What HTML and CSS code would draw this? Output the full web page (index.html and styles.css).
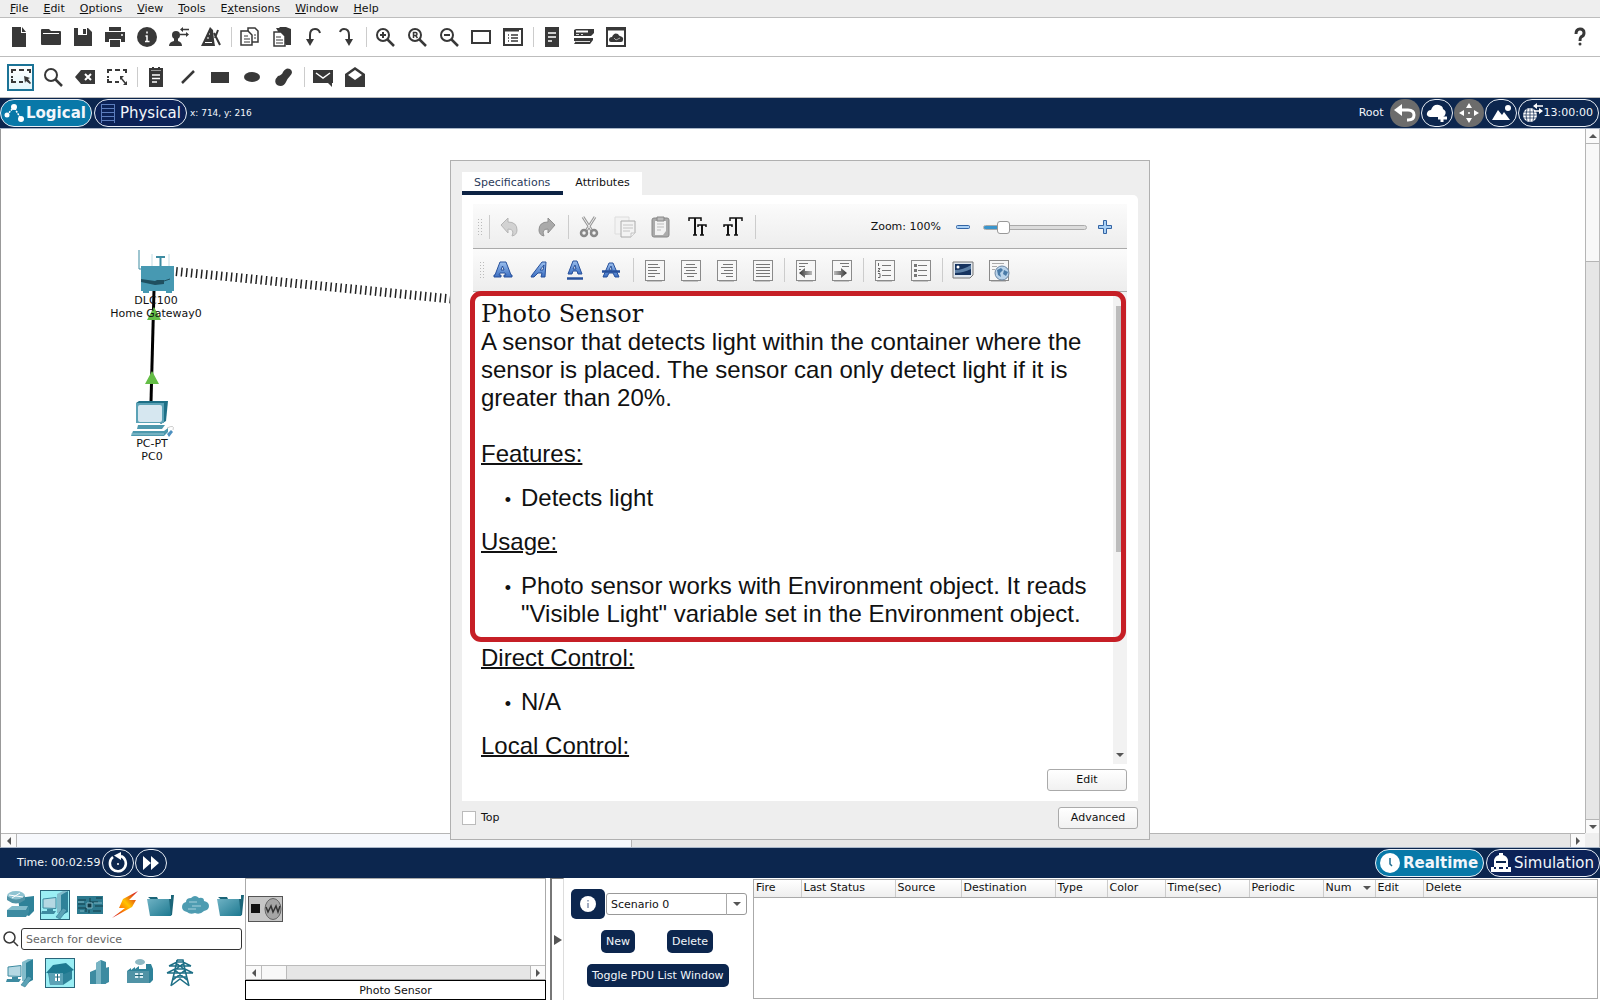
FILE: index.html
```html
<!DOCTYPE html>
<html lang="en">
<head>
<meta charset="utf-8">
<title>Network Simulator</title>
<link rel="stylesheet" href="styles.css">
</head>
<body>
<svg class="defs" aria-hidden="true">
  <defs>
    <linearGradient id="teal" x1="0" y1="0" x2="1" y2="1"><stop offset="0" stop-color="#6fb2c4"/><stop offset="1" stop-color="#1d7990"/></linearGradient>
    <linearGradient id="blue" x1="0" y1="0" x2="0" y2="1"><stop offset="0" stop-color="#9cc0ee"/><stop offset="1" stop-color="#3c6fc2"/></linearGradient>
    <linearGradient id="fire" x1="1" y1="0" x2="0" y2="1"><stop offset="0.1" stop-color="#d8231c"/><stop offset="0.45" stop-color="#ffc400"/><stop offset="0.6" stop-color="#ff9000"/><stop offset="0.9" stop-color="#d8231c"/></linearGradient>
    <linearGradient id="fade" x1="0" y1="0" x2="1" y2="0"><stop offset="0" stop-color="#333"/><stop offset="1" stop-color="#bbb"/></linearGradient>
    <linearGradient id="fadeR" x1="1" y1="0" x2="0" y2="0"><stop offset="0" stop-color="#333"/><stop offset="1" stop-color="#bbb"/></linearGradient>
    <g id="page"><rect x="1.500" y="1.500" width="19" height="20" fill="#f7f7f7" stroke="#8a8a8a"/><path d="M3 22.500h15" stroke="#c4c4c4"/></g>
    <g id="lens" fill="none" stroke="#383838"><circle cx="8" cy="8" r="6" stroke-width="2"/><path d="M12.500 12.500 19 19" stroke-width="2.500"/></g>
    <g id="marquee" fill="none" stroke="#383838" stroke-width="2"><path d="M1 6V3h4M8 3h5M16 3h3v3M1 9v2M1 12v3h4M8 15h4"/></g>
    <g id="workstation">
      <path d="M18 4 27 1V22L19 26Z" fill="#2e8299"/><path d="M16 4 22 1h5l-7 4v18h-4z" fill="#82bccb"/>
      <path d="M2 9 15 7.500V18.500L2 18Z" fill="#b5d8e3" stroke="#3d8ba1"/><path d="M6 19h6v2H6zM1 21h14l-2 3H0z" fill="#3d8ba1"/>
      <path d="M15 27 22 18l4 2-7 9z" fill="#5ba2b6" stroke="#1d6f86" stroke-width=".5"/>
    </g>
    <g id="folder"><path d="M2 7h9l1 2h13V5h3L26 25 24 26z" fill="#1b6578"/><path d="M1 9h22l2 17H4Z" fill="url(#teal)"/></g>
  </defs>
</svg>

<nav class="menubar">
  <a href="#"><u>F</u>ile</a><a href="#"><u>E</u>dit</a><a href="#"><u>O</u>ptions</a><a href="#"><u>V</u>iew</a><a href="#"><u>T</u>ools</a><a href="#">E<u>x</u>tensions</a><a href="#"><u>W</u>indow</a><a href="#"><u>H</u>elp</a>
</nav>

<div class="toolbar">
  <button class="tool" aria-label="New"><svg width="20" height="20"><path d="M3 0h9v6h5v14H3zM13 0l4 5h-4z" fill="#383838"/></svg></button>
  <button class="tool" aria-label="Open"><svg width="20" height="20"><path d="M0 3q0-1 1-1h7l2 2h9q1 0 1 1v12q0 1-1 1H1q-1 0-1-1z" fill="#383838"/><path d="M2 6.500h16" stroke="#fff"/></svg></button>
  <button class="tool" aria-label="Save"><svg width="20" height="20"><path d="M1 1h14l4 4v14H1z" fill="#383838"/><path d="M5 1h9v7H5z" fill="#fff"/><path d="M10 2h3v5h-3z" fill="#383838"/></svg></button>
  <button class="tool" aria-label="Print"><svg width="20" height="20"><path d="M4 0h12v4H4zM0 5h20v10h-4v-3H4v3H0zM5 13h10v7H5z" fill="#383838"/><circle cx="17" cy="8" r="1" fill="#fff"/></svg></button>
  <button class="tool" aria-label="Info"><svg width="20" height="20"><circle cx="10" cy="10" r="10" fill="#383838"/><path d="M10 4.500v2M8.500 9H10v5M8 14.500h4.500" stroke="#fff" stroke-width="1.500" fill="none"/></svg></button>
  <button class="tool" aria-label="User profile"><svg width="20" height="20"><circle cx="7" cy="8" r="4" fill="#383838"/><path d="M5 10h4v4q4 1 4 5H0q0-4 5-5z" fill="#383838"/><path d="M13 2.500h7M11 7.500h6" stroke="#383838" stroke-width="1.500"/><path d="M11 2.500l3-2.500v5zM20 7.500l-3-2.500v5z" fill="#383838"/></svg></button>
  <button class="tool" aria-label="Wizard"><svg width="20" height="20"><path d="M9 0 12 3 13 13l1 6H0l2-4z" fill="#383838"/><path d="M13 6l6 12M17 3l-3 8" stroke="#383838" stroke-width="2" fill="none"/><path d="M6 11h2M8 7h1M4 15.500h7" stroke="#fff"/></svg></button>
  <span class="sep"></span>
  <button class="tool" aria-label="Copy"><svg width="20" height="20" fill="#fff" stroke="#383838" stroke-width="1.500"><path d="M8 1h7l3 3v11H8z"/><path d="M1 4h7l4 4v10H1z"/><path d="M4 9h4M4 12h6M4 15h6M14 8h2M14 11h2" stroke-width="1"/></svg></button>
  <button class="tool" aria-label="Paste"><svg width="20" height="20"><path d="M4 1h3l1-1h6l5 2v16h-5z" fill="#383838"/><path d="M2 5h7l4 4v10H2z" fill="#fff" stroke="#383838" stroke-width="1.500"/><path d="M4 10h5M4 13h7M4 16h7" stroke="#383838"/></svg></button>
  <button class="tool" aria-label="Undo"><svg width="20" height="20"><path d="M6 14V8q0-6 5-6 4 0 5 4" fill="none" stroke="#383838" stroke-width="2"/><path d="M2 12h8l-4 7z" fill="#383838"/></svg></button>
  <button class="tool" aria-label="Redo"><svg width="20" height="20"><path d="M13 14V8q0-6-5-6-3 0-4 3" fill="none" stroke="#383838" stroke-width="2"/><path d="M9 12h8l-4 7z" fill="#383838"/></svg></button>
  <span class="sep"></span>
  <button class="tool" aria-label="Zoom in"><svg width="20" height="20"><use href="#lens"/><path d="M5 8h6M8 5v6" stroke="#383838" stroke-width="2"/></svg></button>
  <button class="tool" aria-label="Reset zoom"><svg width="20" height="20"><use href="#lens"/><path d="M6.500 11V5.500h2q1.500 0 1.500 1.500t-1.500 1.500h-2M8.500 8.500l2 2.500" stroke="#383838" stroke-width="1.500" fill="none"/></svg></button>
  <button class="tool" aria-label="Zoom out"><svg width="20" height="20"><use href="#lens"/><path d="M5 8h6" stroke="#383838" stroke-width="2"/></svg></button>
  <button class="tool" aria-label="Panel"><svg width="20" height="20"><rect x="1" y="4" width="18" height="12" fill="#fff" stroke="#383838" stroke-width="2"/></svg></button>
  <button class="tool" aria-label="List"><svg width="20" height="20"><rect x="1" y="2" width="18" height="16" fill="#fff" stroke="#383838" stroke-width="2"/><path d="M1 3h15" stroke="#383838" stroke-width="3"/><path d="M5 8h1M8 8h7M5 11h1M8 11h7M5 14h1M8 14h7" stroke="#383838" stroke-width="1.500"/></svg></button>
  <span class="sep"></span>
  <button class="tool" aria-label="Notes"><svg width="20" height="20"><path d="M3 0h14v20H3z" fill="#383838"/><path d="M6 6h8M6 10h8M6 14h4" stroke="#fff" stroke-width="1.500"/></svg></button>
  <button class="tool" aria-label="Racks"><svg width="20" height="20"><path d="M0 3l2-1h18v4l-3 3H0zM0 11h19v2l-3 4H0l2-3H0z" fill="#383838"/><path d="M2 4.500h12" stroke="#fff" stroke-width="2"/><path d="M2 7.500h3M7 7.500h2M2 14.500h14" stroke="#ddd"/></svg></button>
  <button class="tool" aria-label="Cloud"><svg width="20" height="20"><rect x="1" y="1" width="18" height="18" fill="#fff" stroke="#383838" stroke-width="2"/><path d="M1 2h18" stroke="#383838" stroke-width="3"/><path d="M3 13q0-3 3-3 2-5 6-3 1 2 2 2 4 1 3 4 0 2-2 2H5q-2 0-2-2z" fill="#383838"/><path d="M8 11l2 2 4-2" stroke="#aaa" fill="none"/></svg></button>
  <span class="grow"></span>
  <button class="tool" aria-label="Help"><svg width="20" height="20"><path d="M6 7q0-5 4-5t4 4q0 3-3 4-1 1-1 4" fill="none" stroke="#383838" stroke-width="3"/><circle cx="10" cy="17" r="1.500" fill="#383838"/></svg></button>
</div>

<div class="toolbar toolbar-draw">
  <button class="tool selected" aria-label="Select"><svg width="20" height="20"><use href="#marquee"/><path d="M13 9l6 2-2 1 3 4-1 1-4-3-1 2z" fill="#383838"/></svg></button>
  <button class="tool" aria-label="Inspect"><svg width="20" height="20"><use href="#lens"/></svg></button>
  <button class="tool" aria-label="Delete"><svg width="20" height="20"><path d="M0 10 6 3h14v14H6z" fill="#383838"/><path d="M10 7l6 6M16 7l-6 6" stroke="#fff" stroke-width="2"/></svg></button>
  <button class="tool" aria-label="Resize"><svg width="20" height="20"><use href="#marquee"/><path d="M14 11l5 6" stroke="#383838" stroke-width="1.500"/><path d="M13 9h4l-4 4zM20 18v-4l-4 4z" fill="#383838"/></svg></button>
  <span class="sep"></span>
  <button class="tool" aria-label="Place note"><svg width="20" height="20"><path d="M3 1h3V0h2v1h4V0h2v1h3v19H3z" fill="#383838"/><path d="M5 3.500h10" stroke="#999"/><path d="M6 8h8M6 11.500h8M6 15h5" stroke="#fff" stroke-width="1.500"/></svg></button>
  <button class="tool" aria-label="Draw line"><svg width="20" height="20"><path d="M4 16 16 4" stroke="#383838" stroke-width="2.500"/></svg></button>
  <button class="tool" aria-label="Draw rectangle"><svg width="20" height="20"><path d="M1 5h18v11H1z" fill="#383838"/></svg></button>
  <button class="tool" aria-label="Draw ellipse"><svg width="20" height="20"><ellipse cx="10" cy="10" rx="8" ry="5" fill="#383838"/></svg></button>
  <button class="tool" aria-label="Draw shape"><svg width="20" height="20"><path d="M9 5q3-5 7-3 4 3 0 7-3 3-4 6-3 6-9 3-4-4 1-9 4-1 5-4z" fill="#383838"/></svg></button>
  <span class="sep"></span>
  <button class="tool" aria-label="Simple PDU"><svg width="20" height="20"><path d="M0 3h20v13h-1v4l-4-4H0z" fill="#383838"/><path d="M3 6l7 5 7-5" stroke="#fff" stroke-width="1.500" fill="none"/></svg></button>
  <button class="tool" aria-label="Complex PDU"><svg width="20" height="20"><path d="M0 7 10 0l10 7v13H0z" fill="#383838"/><path d="M3 8l7-5 7 5-7 5z" fill="#fff"/></svg></button>
</div>

<header class="navbar">
  <button class="pill active"><svg width="20" height="20"><path d="M3 12 10 4l7 12" stroke="#fff" stroke-width="1.500" stroke-dasharray="2 1" fill="none"/><circle cx="3" cy="12" r="2.500" fill="#fff"/><circle cx="10" cy="4" r="3" fill="#fff"/><circle cx="17" cy="16" r="3" fill="#fff"/></svg>Logical</button>
  <button class="pill"><svg width="20" height="20" fill="none" stroke="#5c7dbd"><path d="M3.500 1v19M16.500 1v19M3 1.500h14M3 5.500h14M3 9.500h14M3 13.500h14M3 17.500h14"/></svg>Physical</button>
  <span class="coords">x: 714, y: 216</span>
  <span class="grow"></span>
  <div class="places">
    <span class="root">Root</span>
    <button class="round gray" aria-label="Back"><svg width="24" height="20"><path d="M7 7h8q6 0 6 5t-6 5h-1" fill="none" stroke="#fff" stroke-width="3"/><path d="M1 7l8-6v12z" fill="#fff"/></svg></button>
    <button class="round" aria-label="New cluster"><svg width="24" height="22"><path d="M5 15q-4-1-3-4 1-3 4-3 2-6 8-5 4 1 4 4 4 2 2 6-1 2-5 2z" fill="#fff"/><path d="M17 11v9M13 16h9" stroke="#fff" stroke-width="3"/></svg></button>
    <button class="round gray" aria-label="Move object"><svg width="22" height="22" fill="#fff"><path d="M11 1l3 5H8zM11 21l3-5H8zM1 11l5-3v6zM21 11l-5-3v6z"/><circle cx="11" cy="11" r="1"/></svg></button>
    <button class="round" aria-label="Background"><svg width="22" height="22" fill="#fff"><path d="M2 18 8 8l4 5 2-3 6 8z"/><circle cx="18" cy="6" r="3"/></svg></button>
    <button class="pill env"><svg width="22" height="20"><circle cx="8" cy="12" r="7" fill="#fff"/><path d="M1 9h14M1 12h14M1 15h14M8 5v14M5 6q-2 6 0 12M11 6q2 6 0 12" stroke="#0c264e" stroke-width=".7" fill="none"/><path d="M14 3h7M12 8h6" stroke="#fff" stroke-width="1.500"/><path d="M11 3l4-3v6zM21 8l-4-3v6z" fill="#fff"/></svg>13:00:00</button>
  </div>
</header>

<main class="workspace">
  <div class="canvas">
    <svg class="links" width="370" height="240" viewBox="90 230 370 240">
      <path d="M176 271.500 452 299" stroke="#222" stroke-width="9" stroke-dasharray="1.500 3.500" fill="none"/>
      <path d="M154 290 151 402" stroke="#000" stroke-width="3"/>
      <path d="M154 307l7 13h-14zM152 371l7 13h-14z" fill="#64bd46"/>
    </svg>
    <div class="node gateway">
      <svg width="44" height="44"><path d="M5 0v19h8" stroke="#3d8ba1" fill="none"/><path d="M18 4v12M35 4v12" stroke="#c3dbe2"/><path d="M22 7h9M26.500 7v9" stroke="#3d8ba1" stroke-width="2"/><path d="M7 16h33v25h-2v2h-6v-2H15v2H9v-2H7z" fill="#4799b2"/><path d="M7 29l14 2 2-1h7v4l-9 1-14-3z" fill="#1f5060"/><path d="M30 31l6-2" stroke="#1f5060"/></svg>
      <span>DLC100</span><span>Home Gateway0</span>
    </div>
    <div class="node pc">
      <svg width="44" height="36"><path d="M6 2 9 0h29l-2 20-5 3z" fill="#1d6f86"/><path d="M6 2h28v20H6z" fill="#5ba2b6"/><rect x="8" y="4" width="24" height="17" rx="2" fill="#d6e7f0"/><path d="M8 24h27l-3 4H7zM3 30h31l4-3v4l-4 4H1z" fill="#4d98ad"/><path d="M1 33h33" stroke="#9ecbd7"/><path d="M37 33l4-4 2 2-4 5z" fill="#4d90c0"/><path d="M37 27q8-4 6 2" stroke="#999" stroke-width=".5" fill="none"/></svg>
      <span>PC-PT</span><span>PC0</span>
    </div>
  </div>
  <div class="vscroll"><button class="sb up" aria-label="Scroll up"></button><div class="thumb"></div><button class="sb down" aria-label="Scroll down"></button></div>
  <div class="hscroll"><button class="sb left" aria-label="Scroll left"></button><div class="thumb"></div><button class="sb right" aria-label="Scroll right"></button></div>
  <div class="corner"></div>

  <section class="dialog">
    <div class="tabs"><button class="tab current">Specifications</button><button class="tab">Attributes</button></div>
    <div class="pane">
      <div class="editor">
        <div class="edit-row history">
          <i class="grip"></i><span class="sep"></span>
          <button class="etool" aria-label="Undo"><svg width="22" height="22"><path d="M2 9 9 2v4q9 0 9 8 0 5-5 6 3-7-4-7v4z" fill="#d2d2d2" stroke="#b5b5b5"/></svg></button>
          <button class="etool" aria-label="Redo"><svg width="22" height="22"><path d="M20 9 13 2v4q-9 0-9 8 0 5 5 6-3-7 4-7v4z" fill="#aaa" stroke="#909090"/></svg></button>
          <span class="sep"></span>
          <button class="etool" aria-label="Cut"><svg width="22" height="22" fill="none"><path d="M5 1l9 14M17 1 8 15" stroke="#999" stroke-width="3"/><path d="M5 1l9 14M17 1 8 15" stroke="#eee"/><circle cx="6" cy="17" r="3" stroke="#888" stroke-width="2.500"/><circle cx="16" cy="17" r="3" stroke="#888" stroke-width="2.500"/></svg></button>
          <button class="etool" aria-label="Copy"><svg width="22" height="22" fill="#f3f3f3"><path d="M1 1h14v17H1z" stroke="#ddd"/><path d="M7 5h14v12l-4 4H7z" stroke="#aaa"/><path d="M9 9h10M9 12h10M9 15h7M17 21v-4h4" stroke="#c4c4c4"/></svg></button>
          <button class="etool" aria-label="Paste"><svg width="22" height="22"><rect x="2" y="2" width="17" height="19" rx="2" fill="#aaa" stroke="#888"/><path d="M5 5h11v10l-3 4H5z" fill="#f2f2f2"/><path d="M7 1h7v4H7z" fill="#bbb" stroke="#888"/><path d="M7 8h7M7 11h7M7 14h4" stroke="#bbb"/></svg></button>
          <button class="etool" aria-label="Smaller text"><svg width="22" height="22" fill="none" stroke="#111"><path d="M3 5V2h12v3M7 19h4" stroke-width="1.500"/><path d="M9 2v17" stroke-width="2"/><path d="M12 11V9h8v2M14 19h4" stroke-width="1.500"/><path d="M16 9v10" stroke-width="2"/></svg></button>
          <button class="etool" aria-label="Larger text"><svg width="22" height="22" fill="none" stroke="#111"><path d="M8 5V2h12v3M12 19h4" stroke-width="1.500"/><path d="M14 2v17" stroke-width="2"/><path d="M2 11V9h8v2M4 19h4" stroke-width="1.500"/><path d="M6 9v10" stroke-width="2"/></svg></button>
          <span class="sep"></span>
          <span class="grow"></span>
          <label class="zoom-label" for="zoom">Zoom: 100%</label>
          <button class="zbtn" aria-label="Zoom out"><svg width="14" height="14"><rect x=".5" y="5.500" width="13" height="3" rx="1" fill="#a9d0f5" stroke="#3465a4"/></svg></button>
          <input class="zoom" id="zoom" type="range" min="0" max="100" value="15">
          <button class="zbtn" aria-label="Zoom in"><svg width="14" height="14"><path d="M5.500.5h3v5h5v3h-5v5h-3v-5h-5v-3h5z" fill="#a9d0f5" stroke="#3465a4"/></svg></button>
        </div>
        <div class="edit-row format">
          <i class="grip"></i>
          <button class="etool" aria-label="Bold"><svg width="20" height="22"><path d="M1 18v-2h1L7 3h6l5 13h1v2h-8v-2h2l-1-2H7l-1 2h2v2zM8 11h3l-1.500-4z" fill="url(#blue)" stroke="#27509b" fill-rule="evenodd"/></svg></button>
          <button class="etool" aria-label="Italic"><svg width="20" height="22"><path d="M2 18l1-2L13 3h4l-1 15h-4l1-4H9l-4 4zM11 11h3l1-5z" fill="url(#blue)" stroke="#27509b" fill-rule="evenodd"/></svg></button>
          <button class="etool" aria-label="Underline"><svg width="20" height="22"><path d="M3 15 8 2h4l5 13h-4l-1-3H8l-1 3zM8 10h3l-1-4z" fill="url(#blue)" stroke="#27509b" fill-rule="evenodd"/><path d="M2 19.500h16" stroke="#27509b" stroke-width="2.500"/></svg></button>
          <button class="etool" aria-label="Strikethrough"><svg width="20" height="22"><path d="M2 18 8 4h4l6 14h-4l-2-4H8l-2 4zM8 11h3l-1-4z" fill="url(#blue)" stroke="#27509b" fill-rule="evenodd"/><path d="M1 12.500h18" stroke="#27509b" stroke-width="2.500"/></svg></button>
          <span class="sep"></span>
          <button class="etool" aria-label="Align left"><svg width="21" height="23"><use href="#page"/><path d="M4 5.500h10M4 8.500h12M4 11.500h9M4 14.500h12M4 17.500h7" stroke="#777"/></svg></button>
          <button class="etool" aria-label="Align centre"><svg width="21" height="23"><use href="#page"/><path d="M6 5.500h9M4 8.500h13M6 11.500h9M4 14.500h13M7 17.500h7" stroke="#777"/></svg></button>
          <button class="etool" aria-label="Align right"><svg width="21" height="23"><use href="#page"/><path d="M7 5.500h10M5 8.500h12M8 11.500h9M5 14.500h12M10 17.500h7" stroke="#777"/></svg></button>
          <button class="etool" aria-label="Justify"><svg width="21" height="23"><use href="#page"/><path d="M4 5.500h14M4 8.500h14M4 11.500h14M4 14.500h14M4 17.500h14" stroke="#777"/></svg></button>
          <span class="sep"></span>
          <button class="etool" aria-label="Outdent"><svg width="21" height="23"><use href="#page"/><path d="M4 4.500h9M4 7.500h6M4 10.500h2" stroke="#777"/><path d="M4 14l6-5v3h7v4h-7v3z" fill="url(#fade)"/></svg></button>
          <button class="etool" aria-label="Indent"><svg width="21" height="23"><use href="#page"/><path d="M9 4.500h9M11 7.500h7" stroke="#777"/><path d="M16 14l-6-5v3H3v4h7v3z" fill="url(#fadeR)"/></svg></button>
          <span class="sep"></span>
          <button class="etool" aria-label="Numbered list"><svg width="21" height="23"><use href="#page"/><path d="M8 6.500h9M8 11.500h9M8 16.500h9" stroke="#777"/><path d="M4.500 4v3M4 9.500h2l-2 3h2M4 14.500h2v4H4" stroke="#666" fill="none"/></svg></button>
          <button class="etool" aria-label="Bulleted list"><svg width="21" height="23"><use href="#page"/><path d="M8 6.500h9M8 11.500h9M8 16.500h9" stroke="#777"/><path d="M4 5h3v3H4zM4 10h3v3H4zM4 15h3v3H4z" fill="#777"/></svg></button>
          <span class="sep"></span>
          <button class="etool" aria-label="Insert image"><svg width="22" height="22"><path d="M1 3h20v13l-3 3H1z" fill="#dfe6ee" stroke="#777"/><path d="M3 5h16v11H3z" fill="#16335f"/><path d="M3 11q8 0 16-5v4q-8 4-16 4z" fill="#5c7fa5"/><circle cx="6" cy="8" r="1.500" fill="#fff"/></svg></button>
          <button class="etool" aria-label="Insert link"><svg width="22" height="23"><use href="#page"/><path d="M4 4.500h12M4 7.500h5M4 10.500h3" stroke="#aaa"/><circle cx="14" cy="14" r="7" fill="#b9d3ea" stroke="#6b86a3"/><path d="M9 11l4-2 2 2-3 3 1 4-3-2zM16 11l4 2-2 4-3-2z" fill="#4a7ba8"/></svg></button>
        </div>
        <div class="doc-area">
          <article class="doc">
            <h1>Photo Sensor</h1>
            <p class="lead">A sensor that detects light within the container where the sensor is placed. The sensor can only detect light if it is greater than 20%.</p>
            <h2>Features:</h2>
            <ul><li>Detects light</li></ul>
            <h2>Usage:</h2>
            <ul><li>Photo sensor works with Environment object. It reads "Visible Light" variable set in the Environment object.</li></ul>
            <h2>Direct Control:</h2>
            <ul><li>N/A</li></ul>
            <h2>Local Control:</h2>
          </article>
          <div class="doc-scroll"><i class="doc-thumb"></i><i class="arrow down"></i></div>
          <div class="highlight"></div>
        </div>
        <button class="plain">Edit</button>
      </div>
    </div>
    <div class="dialog-foot">
      <label><input type="checkbox">Top</label>
      <button class="plain">Advanced</button>
    </div>
  </section>
</main>

<div class="navbar timebar">
  <span class="time">Time: 00:02:59</span>
  <button class="round" aria-label="Reset time"><svg width="22" height="22"><path d="M6 5a8 8 0 1 0 8-1" fill="none" stroke="#fff" stroke-width="2.500"/><path d="M7 3.500 14 0v8z" fill="#fff"/><circle cx="11" cy="12" r="1" fill="#fff"/></svg></button>
  <button class="round" aria-label="Fast forward"><svg width="20" height="20" fill="#fff"><path d="M2 3l8 7-8 7zM10 3l8 7-8 7z"/></svg></button>
  <span class="grow"></span>
  <button class="pill active"><svg width="22" height="22"><circle cx="11" cy="11" r="10" fill="#fff"/><path d="M11 6v6l2 2" stroke="#1c6b8e" stroke-width="1.500" fill="none"/></svg>Realtime</button>
  <button class="pill sim"><svg width="22" height="22" fill="#fff"><path d="M4 8q1-4 5-5V1h4v2q4 1 5 5v7H4z"/><path d="M1 15h3v2h2v-2h3v2h4v-2h3v2h2v-2h3v5H1z"/><path d="M6 10h10" stroke="#0c264e" stroke-width="2"/></svg>Simulation</button>
</div>

<footer class="bottom">
  <section class="palette">
    <div class="kinds">
      <button class="kind" aria-label="Network devices"><svg width="28" height="30"><path d="M12 8 28 6v15l-5 5-9-3z" fill="#2e8299"/><ellipse cx="10" cy="6" rx="9" ry="5" fill="#8fc3d1"/><path d="M1 6v4q9 7 18 0V6q-9 7-18 0z" fill="#5093a6"/><path d="M3 5l14 2M6 8l8-5" stroke="#fff"/><path d="M1 20l5-4h16l-2 4z" fill="#82bccb"/><path d="M1 20h20l2-4v6l-3 5H1z" fill="#3d8ba1"/></svg></button>
      <button class="kind chosen" aria-label="End devices"><svg width="28" height="30"><use href="#workstation"/></svg></button>
      <button class="kind" aria-label="Components"><svg width="28" height="30"><path d="M1 6h26v18H1z" fill="#2d7a8f"/><path d="M2 10h8M2 14h7M2 18h8v4M14 8v4h8M19 16h8M13 20v3M20 8h6M17 21h8" stroke="#123c49" fill="none"/><path d="M2 12h6M18 13h8M4 21h4" stroke="#7fb6c5"/><path d="M11 13h5v5h-5z" fill="#123c49" stroke="#7fb6c5"/></svg></button>
      <button class="kind" aria-label="Connections"><svg width="28" height="30"><path d="M27 1 12 9l-4 9h6L1 28l20-11 4-7h-7z" fill="url(#fire)"/></svg></button>
      <button class="kind" aria-label="Miscellaneous"><svg width="28" height="30"><use href="#folder"/></svg></button>
      <button class="kind" aria-label="Multiuser connection"><svg width="28" height="30"><path d="M6 22q-5-1-5-5t4-5q0-4 5-4 4-4 8 0 5-1 5 3 5 1 5 5t-5 5q-4 4-9 2-5 2-8-1z" fill="#4e9cb1"/><path d="M8 12h8M11 16h9M7 19h8" stroke="#a6d0dc"/></svg></button>
      <button class="kind" aria-label="More"><svg width="28" height="30"><use href="#folder"/></svg></button>
    </div>
    <div class="search">
      <svg width="16" height="16" fill="none" stroke="#383838" stroke-width="1.500"><circle cx="6.500" cy="6.500" r="5.500"/><path d="M10.500 10.500 15 15"/></svg>
      <input type="text" placeholder="Search for device" aria-label="Search for device">
    </div>
    <div class="kinds subkinds">
      <button class="kind" aria-label="End devices"><svg width="28" height="30"><use href="#workstation"/></svg></button>
      <button class="kind chosen" aria-label="Home"><svg width="28" height="30"><path d="M2 14 20 6l6 6v9l-9 6H4z" fill="#2e8299"/><path d="M0 15 7 7 20 5l8 7-10 4z" fill="#1d7990"/><path d="M3 15h14v12H4z" fill="#5ba2b6"/><path d="M9 16h5v7H9z" fill="#fff"/><path d="M11.500 16v7M9 19h5" stroke="#1d6579"/></svg></button>
      <button class="kind" aria-label="Smart city"><svg width="28" height="30"><path d="M4 14l7-3v15H4zM10 5l5-3 5 2v22H10zM19 10l4-1v15l-4 2z" fill="#3d8ba1"/><path d="M10 5l5-3v24h-5z" fill="#78b4c4"/></svg></button>
      <button class="kind" aria-label="Industrial"><svg width="28" height="30"><ellipse cx="14" cy="4" rx="5" ry="3" fill="#8eb8c3"/><path d="M1 13l4-3v2l4-3v2l4-3v3h7V6h5l2 5v11l-3 3H1z" fill="#2e8299"/><path d="M1 13h22v12H1z" fill="#5093a6"/><path d="M9 15h8v5H9z" fill="#d7ecf2"/><path d="M13 15v5M9 17.500h8" stroke="#1d6579"/></svg></button>
      <button class="kind" aria-label="Power grid"><svg width="28" height="30" fill="none" stroke="#1d6f86" stroke-width="2"><path d="M11 2h6l2 10 4 16M11 2 9 12 5 28M3 8l8-4h6l8 4M1 15l8-4h10l8 4M3 8h22M1 15h26M10 5l8 6M18 5l-8 6M9 12l12 10M19 12 7 22M8 19h12M6 27l8-6 8 6" stroke-width="1.500"/></svg></button>
    </div>
  </section>
  <section class="models">
    <div class="model-list">
      <button class="model" aria-label="Photo Sensor"><svg width="35" height="26"><rect x=".5" y=".5" width="34" height="25" fill="#c6c6c6" stroke="#555"/><path d="M3 8h9v9H3z" fill="#111"/><ellipse cx="25" cy="13" rx="8" ry="10.500" fill="#a5a5a5" stroke="#666"/><path d="M18 11l2 5 3-6 2 6 3-6 2 6 2-6" fill="none" stroke="#333" stroke-width="1.500"/></svg></button>
      <div class="model-scroll"><button class="sb left" aria-label="Scroll left"></button><div class="thumb"></div><button class="sb right" aria-label="Scroll right"></button></div>
    </div>
    <div class="model-name">Photo Sensor</div>
  </section>
  <button class="splitter" aria-label="Expand"><i class="arrow play"></i></button>
  <section class="scenario">
    <div class="line">
      <button class="navy info" aria-label="Scenario info"><svg width="16" height="16"><circle cx="8" cy="8" r="8" fill="#fff"/><path d="M8 4v1.500M8 7v5" stroke="#8291ad" stroke-width="1.500"/></svg></button>
      <span class="combo"><select aria-label="Scenario"><option>Scenario 0</option></select><span class="drop"><i class="arrow down"></i></span></span>
    </div>
    <div class="line pair"><button class="navy">New</button><button class="navy">Delete</button></div>
    <div class="line toggle"><button class="navy">Toggle PDU List Window</button></div>
  </section>
  <section class="pdus">
    <table>
      <colgroup><col class="c-fire"><col class="c-wide"><col class="c-mid"><col class="c-wide"><col class="c-small"><col class="c-color"><col class="c-time"><col class="c-period"><col class="c-small"><col class="c-edit"><col></colgroup>
      <thead><tr><th>Fire</th><th>Last Status</th><th>Source</th><th>Destination</th><th>Type</th><th>Color</th><th>Time(sec)</th><th>Periodic</th><th><span class="sort">Num<i class="arrow down"></i></span></th><th>Edit</th><th>Delete</th></tr></thead>
    </table>
  </section>
</footer>
</body>
</html>
```
FILE: styles.css
```css
* { box-sizing: border-box; }
body {
  margin: 0;
  min-height: 100vh;
  display: flex;
  flex-direction: column;
  font: 11px/14px "DejaVu Sans", sans-serif;
  color: #111;
  background: #fff;
}
button {
  font: inherit;
  color: inherit;
  padding: 0;
  margin: 0;
  border: 0;
  background: none;
  display: flex;
  align-items: center;
  justify-content: center;
}
svg { display: block; flex: none; }
.defs { position: absolute; width: 0; height: 0; }
.grow { flex: 1; }

/* menu and tool bars */
.menubar {
  display: flex;
  gap: 15px;
  height: 18px;
  padding: 2px 10px 0;
  background: #eee;
  border-bottom: 1px solid #bdbdbd;
}
.menubar a { color: #111; text-decoration: none; }
.toolbar {
  display: flex;
  align-items: center;
  height: 39px;
  padding: 0 4px 0 3px;
  border-bottom: 1px solid #bdbdbd;
}
.toolbar-draw { height: 41px; padding-left: 4px; }
.tool { width: 32px; height: 27px; }
.selected { width: 27px; margin: 0 3px; border: 2px solid #1b7396; background: linear-gradient(#fff, #e4f6fb); }
.sep { width: 7px; height: 20px; flex: none; }
.sep::after { content: ""; display: block; width: 1px; height: 100%; margin-left: 4px; background: #ccc; }

/* navy bars */
.navbar {
  display: flex;
  align-items: center;
  gap: 2px;
  height: 31px;
  background: #0c264e;
  border-bottom: 1px solid #a9b6c8;
  color: #f2f6fb;
}
.pill {
  height: 28px;
  padding: 0 5px 0 3px;
  gap: 2px;
  border: 1px solid #e8eef5;
  border-radius: 14px;
  font-size: 15px;
  background: #0c2257;
}
.active { background: #0878a8; font-weight: bold; }
.coords { font-size: 9px; margin-left: 1px; }
.places { display: flex; align-items: center; gap: 1px; margin-right: 1px; }
.root { margin-right: 5px; }
.round { width: 32px; height: 28px; border: 1px solid #e8eef5; border-radius: 14px; }
.round.gray { width: 30px; border: 0; background: #6c6c6c; }
.env { font-size: 11px; gap: 0; background: none; }
.timebar { height: 30px; border-bottom: 0; gap: 1px; }
.time { margin-left: 17px; }
.sim { margin-left: 1px; }

/* workspace */
.workspace {
  position: relative;
  flex: 1;
  display: grid;
  grid-template-columns: 1fr 14px;
  grid-template-rows: 1fr 14px;
  border-left: 1px solid #999;
  border-right: 1px solid #bbb;
  min-height: 719px;
  border-bottom: 1px solid #a9b6c8;
}
.canvas { position: relative; overflow: hidden; }
.links { position: absolute; left: 89px; top: 101px; }
.node { position: absolute; display: flex; flex-direction: column; align-items: center; line-height: 13px; }
.gateway { left: 107px; top: 121px; width: 96px; }
.pc { left: 121px; top: 272px; width: 60px; }
.vscroll, .hscroll, .model-scroll { display: flex; background: #e6e6e6; }
.vscroll { flex-direction: column; border-left: 1px solid #b5b5b5; }
.hscroll { border-top: 1px solid #b5b5b5; }
.vscroll .thumb { height: 119px; background: #f8f8f8; border: solid #b5b5b5; border-width: 1px 0; }
.hscroll .thumb { width: 616px; background: #f6f8fc; border: solid #b5b5b5; border-width: 0 1px; }
.corner { background: #eee; }
.sb { width: 15px; height: 14px; background: #fafafa; flex: none; }
.vscroll .sb { width: 13px; }
.vscroll .down { margin-top: auto; border-top: 1px solid #b5b5b5; }
.hscroll .sb { height: 13px; }
.sb.right { margin-left: auto; border-left: 1px solid #b5b5b5; }
.sb::after, .arrow { content: ""; display: block; border: 4px solid transparent; width: 0; height: 0; flex: none; }
.sb.up::after { border-top-width: 0; border-bottom-color: #555; }
.sb.down::after, .arrow.down { border-bottom-width: 0; border-top-color: #555; }
.sb.left::after { border-left-width: 0; border-right-color: #555; }
.sb.right::after { border-right-width: 0; border-left-color: #555; }

/* device window */
.dialog {
  position: absolute;
  left: 449px;
  top: 31px;
  width: 700px;
  padding: 11px 11px 10px;
  background: #eee;
  border: 1px solid #b0b0b0;
}
.tabs { display: flex; }
.tab { height: 23px; padding: 3px 12px 0; background: #fff; border-bottom: 4px solid #fff; }
.tab.current { padding-right: 13px; border-color: #0d2344; color: #2b3b5b; }
.pane { background: #fff; border-radius: 0 5px 0 0; padding: 9px 11px 10px; }
.editor { display: flex; flex-direction: column; }
.editor > .plain { align-self: flex-end; margin-top: 5px; }
.edit-row { display: flex; align-items: center; height: 45px; background: linear-gradient(#fbfbfb, #ededed); border-bottom: 1px solid #aaa; padding-left: 4px; }
.format { height: 43px; padding-left: 6px; }
.grip { width: 6px; height: 18px; background: radial-gradient(circle, #bbb 1px, transparent 1px) 0 0 / 3px 3px; }
.history { padding: 2px 14px 0 4px; }
.history .grip { margin-right: 2px; }
.etool { width: 36px; height: 32px; }
.edit-row .sep { height: 24px; }
.zoom-label { margin-right: 14px; }
.zbtn { width: 16px; height: 16px; }
.zoom { appearance: none; width: 104px; height: 14px; margin: 0 10px 0 12px; background: none; }
.zoom::-webkit-slider-runnable-track { height: 5px; border: 1px solid #aaa; border-radius: 3px; background: linear-gradient(90deg, #3a95cc 18%, #dcdcdc 18%); }
.zoom::-webkit-slider-thumb { appearance: none; width: 13px; height: 13px; margin-top: -5px; border: 1px solid #999; border-radius: 3px; background: #fff; }
.doc-area { position: relative; display: flex; height: 472px; }
.doc { flex: 1; padding: 8px 18px 0 8px; overflow: hidden; font: 24px/28px "Liberation Sans", sans-serif; color: #111; }
.doc h1 { margin: 0; font: 24px/28px "DejaVu Serif", serif; }
.doc p { margin: 0 0 28px; }
.doc h2 { margin: 0; font: inherit; text-decoration: underline; text-decoration-thickness: 2px; }
.doc ul { margin: 16px 0; padding-left: 40px; }
.doc li::marker { content: "•  "; font-size: 18px; }
.doc-scroll { width: 14px; background: #f2f2f2; display: flex; flex-direction: column; align-items: center; padding: 14px 0 7px; }
.doc-thumb { width: 8px; height: 246px; background: #bcbcbc; }
.doc-scroll .arrow { margin-top: auto; }
.highlight { position: absolute; inset: -1px 1px 122px -3px; border: 5px solid #c61f26; border-radius: 11px; pointer-events: none; }
.plain { width: 80px; height: 22px; border: 1px solid #aaa; border-radius: 3px; background: linear-gradient(#fff, #f1f1f1); }
.dialog-foot { display: flex; justify-content: space-between; align-items: center; margin-top: 6px; }
.dialog-foot label { display: flex; align-items: center; gap: 5px; }
.dialog-foot input { appearance: none; width: 14px; height: 14px; margin: 0; border: 1px solid #bbb; background: #fff; }

/* bottom panel */
.bottom { display: flex; min-height: 122px; }
.palette { width: 245px; padding: 12px 3px 0 5px; overflow: hidden; }
.kinds { display: flex; gap: 5px; }
.kind { width: 30px; height: 30px; flex: none; }
.kind.chosen { background: #9aeef4; border: 1px solid #29657a; }
.subkinds { gap: 10px; margin-top: 8px; }
.search { display: flex; align-items: center; gap: 2px; margin: 8px 0 0 -2px; }
.search input { flex: 1; min-width: 0; height: 22px; margin: 0; padding: 0 4px; border: 1px solid #333; border-radius: 3px; font: inherit; background: #fff; }
.search input::placeholder { color: #666; opacity: 1; }
.models { width: 301px; display: flex; flex-direction: column; }
.model-list { flex: 1; display: flex; flex-direction: column; border: 1px solid #aaa; }
.model { margin: 17px 0 0 2px; align-self: flex-start; }
.model-scroll { margin-top: auto; border-top: 1px solid #bbb; }
.model-scroll .thumb { width: 26px; background: #f8f8f8; border: solid #bbb; border-width: 0 1px; }
.model-scroll .sb { height: 13px; }
.model-name { height: 20px; border: 1px solid #000; text-align: center; line-height: 20px; }
.splitter { width: 14px; margin-left: 4px; border: solid #777; border-width: 1px 0 0 2px; border-right: 1px solid #ddd; }
.arrow.play { border: 5px solid transparent; border-left: 8px solid #555; border-right: 0; }
.scenario { width: 189px; padding: 11px 6px 0 7px; }
.line { display: flex; align-items: center; }
.combo { display: flex; flex: 1; position: relative; margin-left: 1px; }
.combo select { appearance: none; width: 100%; height: 22px; padding: 1px 4px 0; border: 1px solid #999; border-radius: 3px; font: inherit; color: #111; background: #fff; }
.drop { position: absolute; right: 0; top: 0; width: 21px; height: 22px; border-left: 1px solid #aaa; display: flex; align-items: center; justify-content: center; pointer-events: none; }
.navy { height: 23px; padding: 0 5px; border-radius: 5px; background: #0c264e; color: #f2f6fb; }
.info { width: 34px; height: 30px; }
.pair { gap: 32px; padding-left: 30px; margin-top: 11px; }
.toggle { margin-top: 11px; padding-left: 16px; }
.pdus { flex: 1; margin: 1px 2px 1px 0; border: 1px solid #aaa; }
table { width: 100%; table-layout: fixed; border-collapse: collapse; }
th { height: 17px; padding: 0 0 0 2px; font-weight: normal; text-align: left; line-height: 16px; background: linear-gradient(#fff, #eee); border-bottom: 1px solid #aaa; border-right: 1px solid #ccc; }
th:last-child { border-right: 0; }
.sort { display: flex; align-items: center; justify-content: space-between; padding-right: 4px; }
.c-fire { width: 47px; }
.c-edit { width: 48px; }
.c-wide { width: 94px; }
.c-mid { width: 66px; }
.c-small { width: 52px; }
.c-color { width: 58px; }
.c-time { width: 84px; }
.c-period { width: 74px; }
```
